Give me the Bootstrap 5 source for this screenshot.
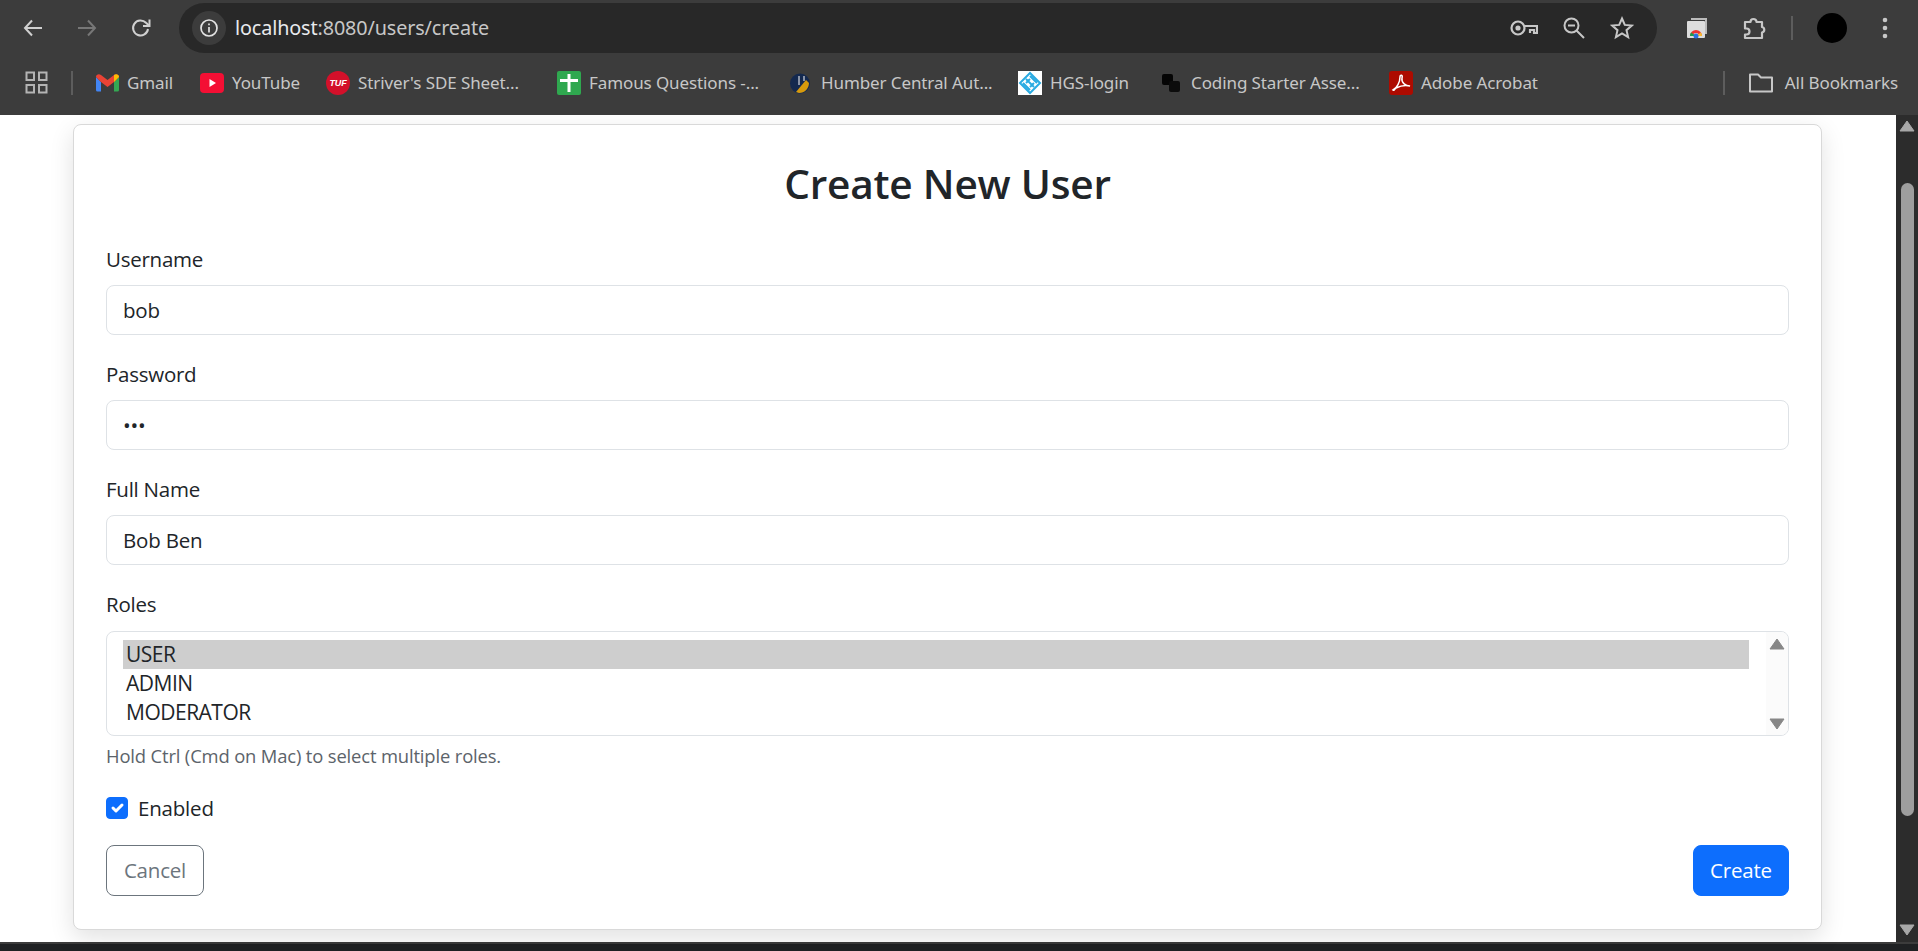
<!DOCTYPE html>
<html lang="en">
<head>
<meta charset="utf-8">
<title>Create New User</title>
<link href="https://cdn.jsdelivr.net/npm/bootstrap@5.3.0/dist/css/bootstrap.min.css" rel="stylesheet">
<style>
html,body{height:951px;overflow:hidden;background:#fff}
body{font-family:"Open Sans","Noto Sans",sans-serif;color:#212529}
.chrome{height:115px;background:#3c3c3c;color:#c7c7c7;font-family:"Noto Sans",sans-serif}
.toolrow{height:56px}
.tb-ic{width:54px;flex:none;justify-content:center}
.tb-first{margin-left:6px}
.omni{width:1478px;height:50px;margin-left:11px;background:#282828;border-radius:25px;padding:0 23px 0 13px;flex:none}
.info-dot{width:34px;height:34px;border-radius:50%;background:#3c3c3c;margin-right:9px}
.url{font-size:19.8px;color:#c7c7c7;letter-spacing:-.12px}
.url b{font-weight:400;color:#e8eaed}
.omni-end{gap:24px}
.tools-right{margin-left:20px;width:246px}
.vbar{width:2px;height:24px;background:#5d5d5d;flex:none}
.avatar{width:30px;height:30px;border-radius:50%;background:#000;flex:none}
.bmrow{height:59px;padding-bottom:6px;font-size:17px;position:relative}
.apps{margin-left:25px;width:23px}
.bmsep{margin:0 23px 0 23px}
.bmk{flex:none;gap:8px;white-space:nowrap;letter-spacing:-.1px}
.bmk svg{flex:none}
.w1{width:104px}.w2{width:126px}.w3{width:231px}.w4{width:232px}.w5{width:229px}.w6{width:141px}.w7{width:230px}.w8{width:182px}
.bm-end{margin-left:auto;padding-right:20px}
.bm-end .vbar{margin-right:24px}
.viewport{height:827px}
.pagearea{flex:1 1 auto;min-width:0;padding:9px 74px 0 73px}
.sheet{height:806px;border:1px solid #d9d9d9;border-radius:8px;padding:0 32px;box-shadow:0 8px 24px rgba(0,0,0,.12)}
.sheet-title{font-family:"Open Sans",sans-serif;font-size:40.6px;font-weight:600;line-height:46px;text-align:center;margin:36px 0 39px;letter-spacing:-.2px}
.fld{margin-bottom:26px}
.fld-label{font-size:20.5px;line-height:26px;margin-bottom:13px;display:block;letter-spacing:-.25px}
.fld-label-roles{margin-bottom:14px}
.fld-input{height:50px;font-size:20.5px;padding:0 16px;border-color:#dee2e6;border-radius:8px;color:#212529;font-family:"Open Sans",sans-serif;letter-spacing:-.2px}
.sel-wrap{margin-bottom:8px}
.fld-select{height:105px;font-size:21px;padding:8px 39px 8px 16px;background-image:none;border-color:#dee2e6;border-radius:8px;color:#212529;font-family:"Open Sans",sans-serif;letter-spacing:-.5px;overflow:hidden}
.fld-select option{height:29px;line-height:29px;min-height:29px;padding:0 3px;width:1626px}
.fld-select option:checked{background:#cecece linear-gradient(#cecece,#cecece);color:#212529}
.sel-bar{top:1px;right:1px;bottom:1px;width:22px;background:#fbfbfb;border-radius:0 7px 7px 0;padding:6px 0 5px}
.hint{font-size:18.4px;line-height:24px;color:#5c636a;letter-spacing:-.15px;margin-bottom:28px}
.chk-row{gap:10px;margin-bottom:25px;height:24px}
.chk-box{width:22px;height:22px;margin:0;border-radius:5px;flex:none;background-color:#0d6efd;border-color:#0d6efd}
.chk-label{font-size:20.5px;letter-spacing:-.2px}
.act{height:51px;font-size:20.5px;border-radius:8px;padding:0 16px;letter-spacing:-.2px;display:inline-flex;align-items:center;justify-content:center}
.act-cancel{width:98px;color:#6c757d;border-color:#6c757d}
.act-create{width:96px}
.vscroll{width:22px;flex:none;background:#2c2c2c}
.vs-up{height:28px;padding-top:5px}
.vs-gap{height:40px}
.vs-thumb{width:13px;height:633px;margin:0 auto;background:#9e9e9e;border-radius:7px}
.vs-down{margin-top:auto;height:18px}
.bottomstrip{height:9px;background:#1f2123;border-top:2px solid #3c3c3c}
</style>
</head>
<body>
<div class="chrome d-flex flex-column">
  <div class="toolrow d-flex align-items-center">
    <div class="tb-ic d-flex tb-first"><svg width="22" height="22" viewBox="0 0 22 22" fill="none" stroke="#d0d0d0" stroke-width="2"><path d="M20 11H3M10 3.500 3 11l7 7.500"/></svg></div>
    <div class="tb-ic d-flex"><svg width="22" height="22" viewBox="0 0 22 22" fill="none" stroke="#777" stroke-width="2"><path d="M2 11h17M12 3.500l7 7.500-7 7.500"/></svg></div>
    <div class="tb-ic d-flex"><svg width="22" height="22" viewBox="0 0 22 22" fill="none" stroke="#d0d0d0" stroke-width="2"><path d="M18 12a7.500 7.500 0 1 1-2-6.200L19 8.500"/><path d="M19.500 2.500V9h-6.500"/></svg></div>
    <div class="omni d-flex align-items-center">
      <div class="info-dot d-flex align-items-center justify-content-center flex-none"><svg width="20" height="20" viewBox="0 0 20 20" fill="none" stroke="#e3e3e3" stroke-width="1.700"><circle cx="10" cy="10" r="8"/><path d="M10 9v5.500M10 5.500v1.800"/></svg></div>
      <div class="url"><b>localhost</b>:8080/users/create</div>
      <div class="omni-end d-flex align-items-center ms-auto">
        <svg width="28" height="22" viewBox="0 0 28 22" fill="none" stroke="#c7c7c7" stroke-width="2.200"><circle cx="8" cy="11" r="6.500"/><circle cx="8" cy="11" r="1.500" fill="#c7c7c7"/><path d="M14.500 9h12.500v7h-3v-3h-4v3"/></svg>
        <svg width="24" height="24" viewBox="0 0 24 24" fill="none" stroke="#c7c7c7" stroke-width="2"><circle cx="9.500" cy="9.500" r="7"/><path d="M14.500 14.500 22 22M6 9.500h7"/></svg>
        <svg width="24" height="24" viewBox="0 0 24 24" fill="none" stroke="#c7c7c7" stroke-width="2"><path d="m12 2.500 2.800 6.400 7 .7-5.300 4.600 1.600 6.900-6.100-3.600-6.100 3.600 1.600-6.900L2.200 9.600l7-.7z"/></svg>
      </div>
    </div>
    <div class="tools-right d-flex align-items-center">
      <svg class="ms-2" width="24" height="24" viewBox="0 0 24 24"><path d="M6 2h16v16h-2V4H6z" fill="#bbb"/><rect x="2" y="5" width="18" height="17" rx="1" fill="#ddd"/><path d="M5 20a6 6 0 0 1 12 0h-3a3 3 0 0 0-6 0z" fill="#e33"/><path d="M5 20a6 6 0 0 1 1-3.500l3 2V20z" fill="#1a9e4b"/><path d="M17 20a6 6 0 0 0-1-3.500l-3 2V20z" fill="#f9bb2d"/><circle cx="11" cy="20" r="2.500" fill="#2a70e0"/></svg>
      <svg style="margin-left:32px" width="26" height="26" viewBox="0 0 26 26" fill="none" stroke="#c7c7c7" stroke-width="2.200"><path d="M4 7h5.500a3 3 0 0 1 6 0H21v5a2.800 2.800 0 0 1 0 5.500V23H4v-3.500h1.500a3 3 0 0 0 0-6H4z" stroke-linejoin="round"/></svg>
      <div class="vbar" style="margin-left:24px"></div>
      <div class="avatar" style="margin-left:24px"></div>
      <svg style="margin-left:35px" width="6" height="24" viewBox="0 0 6 24" fill="#c7c7c7"><circle cx="3" cy="4" r="2.300"/><circle cx="3" cy="12" r="2.300"/><circle cx="3" cy="20" r="2.300"/></svg>
    </div>
  </div>
  <div class="bmrow d-flex align-items-center">
    <svg class="apps flex-none" width="23" height="23" viewBox="0 0 23 23" fill="none" stroke="#b4b4b4" stroke-width="2"><rect x="1.500" y="1.500" width="7.500" height="7.500"/><rect x="14" y="1.500" width="7.500" height="7.500"/><rect x="1.500" y="14" width="7.500" height="7.500"/><rect x="14" y="14" width="7.500" height="7.500"/></svg>
    <div class="vbar bmsep"></div>
    <div class="bmk w1 d-flex align-items-center"><svg width="23" height="18" viewBox="0 0 23 18"><path d="M0 3v13a1.500 1.500 0 0 0 1.500 1.500H5V8z" fill="#4285f4"/><path d="M23 3v13a1.500 1.500 0 0 1-1.500 1.500H18V8z" fill="#34a853"/><path d="M0 3c0-2.500 3-3.500 5-2l6.500 5L18 1c2-1.500 5-.5 5 2l-5 5-6.500 5L5 8z" fill="#ea4335"/><path d="M18 1c2-1.500 5-.5 5 2l-5 5z" fill="#fbbc04"/></svg><span>Gmail</span></div>
    <div class="bmk w2 d-flex align-items-center"><svg width="24" height="20" viewBox="0 0 24 20"><rect width="24" height="20" rx="4" fill="#f40f34"/><path d="M9.500 6v8l6.500-4z" fill="#fff"/></svg><span>YouTube</span></div>
    <div class="bmk w3 d-flex align-items-center"><svg width="24" height="24" viewBox="0 0 24 24"><circle cx="12" cy="12" r="12" fill="#d3102a"/><text x="12" y="15" text-anchor="middle" font-family="Liberation Sans" font-size="9" font-weight="700" font-style="italic" fill="#fff">TUF</text></svg><span>Striver's SDE Sheet...</span></div>
    <div class="bmk w4 d-flex align-items-center"><svg width="24" height="24" viewBox="0 0 24 24"><rect width="24" height="24" rx="2" fill="#2fa84f"/><path d="M10.500 3h3v5h7.500v3h-7.500v10h-3V11H3V8h7.500z" fill="#fff"/></svg><span>Famous Questions -...</span></div>
    <div class="bmk w5 d-flex align-items-center"><svg width="24" height="24" viewBox="0 0 24 24"><circle cx="11" cy="12.500" r="10" fill="#14294f"/><path d="M7 21l10-12 3 3c0 5-4 10-10 10z" fill="#d79a0c"/><path d="M10 5v9M15 5v5" stroke="#fff" stroke-width="1"/></svg><span>Humber Central Aut...</span></div>
    <div class="bmk w6 d-flex align-items-center"><svg width="24" height="24" viewBox="0 0 24 24"><rect width="24" height="24" fill="#fff"/><path d="M12 2 2 12l10 10 10-10zM8 8l8 8M12 5l7 7M5 12l7 7M8 12l4-4M12 16l4-4" fill="none" stroke="#29abe2" stroke-width="2"/></svg><span>HGS-login</span></div>
    <div class="bmk w7 d-flex align-items-center"><svg width="24" height="24" viewBox="0 0 24 24"><rect x="3" y="3" width="11" height="11" rx="2" fill="#050505"/><rect x="10" y="10" width="11" height="11" rx="2" fill="#0c0c0c"/></svg><span>Coding Starter Asse...</span></div>
    <div class="bmk w8 d-flex align-items-center"><svg width="24" height="24" viewBox="0 0 24 24"><rect width="24" height="24" rx="3" fill="#ad0b00"/><path d="M4 19c4-2 7-8 7-13 0-3 3-2 2 1-1 5 4 8 8 8-4-1-10 0-14 2-1 1-2 3-3 2z" fill="none" stroke="#fff" stroke-width="1.500"/></svg><span>Adobe Acrobat</span></div>
    <div class="bm-end d-flex align-items-center">
      <div class="vbar"></div>
      <div class="bmk d-flex align-items-center" style="gap:12px"><svg width="24" height="20" viewBox="0 0 24 20" fill="none" stroke="#c7c7c7" stroke-width="2"><path d="M1 18.500V1.500h8l3 3h11v14z" stroke-linejoin="round"/></svg><span>All Bookmarks</span></div>
    </div>
  </div>
</div>
<div class="viewport d-flex">
  <div class="pagearea">
    <form class="sheet bg-white">
      <h1 class="sheet-title">Create New User</h1>
      <div class="fld">
        <label class="fld-label" for="u">Username</label>
        <input id="u" class="form-control fld-input" type="text" value="bob">
      </div>
      <div class="fld">
        <label class="fld-label" for="p">Password</label>
        <input id="p" class="form-control fld-input" type="password" value="bob">
      </div>
      <div class="fld">
        <label class="fld-label" for="f">Full Name</label>
        <input id="f" class="form-control fld-input" type="text" value="Bob Ben">
      </div>
      <div>
        <label class="fld-label fld-label-roles" for="r">Roles</label>
        <div class="sel-wrap position-relative">
          <select id="r" class="form-select fld-select" multiple>
            <option selected>USER</option>
            <option>ADMIN</option>
            <option>MODERATOR</option>
          </select>
          <div class="sel-bar position-absolute d-flex flex-column justify-content-between align-items-center">
            <svg width="16" height="12" viewBox="0 0 16 12"><path d="M8 1 1 11h14z" fill="#878787" stroke="#878787" stroke-linejoin="round"/></svg>
            <svg width="16" height="12" viewBox="0 0 16 12"><path d="M1 1h14L8 11z" fill="#878787" stroke="#878787" stroke-linejoin="round"/></svg>
          </div>
        </div>
        <div class="hint">Hold Ctrl (Cmd on Mac) to select multiple roles.</div>
      </div>
      <div class="chk-row d-flex align-items-center">
        <input id="e" class="form-check-input chk-box" type="checkbox" checked>
        <label class="chk-label" for="e">Enabled</label>
      </div>
      <div class="d-flex justify-content-between">
        <a class="btn btn-outline-secondary act act-cancel" href="#">Cancel</a>
        <button class="btn btn-primary act act-create" type="button">Create</button>
      </div>
    </form>
  </div>
  <div class="vscroll d-flex flex-column">
    <div class="vs-up d-flex justify-content-center align-items-start"><svg width="16" height="12" viewBox="0 0 16 12"><path d="M8 1 1 11h14z" fill="#a8a8a8" stroke="#a8a8a8" stroke-linejoin="round"/></svg></div>
    <div class="vs-gap"></div>
    <div class="vs-thumb"></div>
    <div class="vs-down d-flex justify-content-center"><svg width="16" height="12" viewBox="0 0 16 12"><path d="M1 1h14L8 11z" fill="#a8a8a8" stroke="#a8a8a8" stroke-linejoin="round"/></svg></div>
  </div>
</div>
<div class="bottomstrip"></div>
</body>
</html>
